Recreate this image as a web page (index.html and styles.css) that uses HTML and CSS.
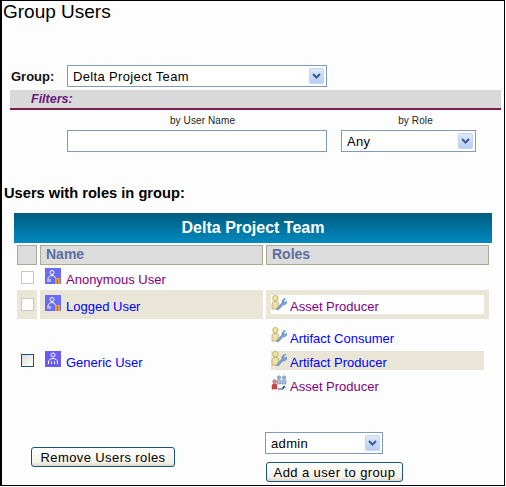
FILE: index.html
```html
<!DOCTYPE html>
<html lang="en">
<head>
<meta charset="utf-8">
<title>Group Users</title>
<link rel="stylesheet" href="styles.css">
</head>
<body>
<svg class="defs" width="0" height="0" aria-hidden="true">
  <defs>
    <symbol id="role" viewBox="0 0 16 16">
      <path d="M5 14.500l6-6.700c-.5-2 .8-4.300 3.600-4.300l-1.800 2.200.6 1.600 1.700-.1.900-1.600c.5 2.700-1.800 4.800-4 4.200l-4.500 5z" fill="#78a2d4" stroke="#5a84b8" stroke-width=".6"/>
      <path d="M1 14V9.500C1 7.500 2.300 6.300 4.400 6.300S8 7.500 8 9.500L5.500 14z" fill="#ebe0a8" stroke="#b0a060" stroke-width=".7"/>
      <circle cx="4.400" cy="3.200" r="2.800" fill="#f2e294" stroke="#b0a060" stroke-width=".7"/>
    </symbol>
    <symbol id="group" viewBox="0 0 16 16">
      <circle cx="8" cy="2.500" r="1.700" fill="#9ab6d6" stroke="#54789f" stroke-width=".5"/>
      <circle cx="13" cy="2.500" r="1.700" fill="#9ab6d6" stroke="#54789f" stroke-width=".5"/>
      <path d="M6 9V6c0-1 1-1.500 2-1.500S10 5 10 6v3zM11 9V6c0-1 1-1.500 2-1.500S15 5 15 6v3z" fill="#a8c2de" stroke="#54789f" stroke-width=".5"/>
      <circle cx="3.500" cy="6.500" r="1.800" fill="#e09090" stroke="#a03030" stroke-width=".5"/>
      <path d="M1 14v-3.500c0-1 1-1.800 2.500-1.800S6 9.500 6 10.500V14z" fill="#cc4848" stroke="#a03030" stroke-width=".5"/>
      <path d="M7 14h5l1-2.500M11.500 13l1.500-1.800 1.500 1.500" fill="none" stroke="#1c4a80" stroke-width="1.100"/>
    </symbol>
  </defs>
</svg>
<main class="frame">
  <h1 class="title">Group Users</h1>

  <div class="group-row">
    <label class="group-label" for="group-select">Group:</label>
    <div class="select select-group">
      <select id="group-select"><option>Delta Project Team</option></select>
      <span class="arrow"><svg width="9" height="6" viewBox="0 0 9 6"><path d="M1 1l3.500 3.500L8 1" fill="none" stroke="#3a5a90" stroke-width="2"/></svg></span>
    </div>
  </div>

  <div class="filters-bar">Filters:</div>

  <div class="filters">
    <div class="filter filter-name">
      <label class="filter-label" for="f-name">by User Name</label>
      <input id="f-name" class="text-input" type="text">
    </div>
    <div class="filter filter-role">
      <label class="filter-label" for="f-role">by Role</label>
      <div class="select select-role">
        <select id="f-role"><option>Any</option></select>
        <span class="arrow"><svg width="9" height="6" viewBox="0 0 9 6"><path d="M1 1l3.500 3.500L8 1" fill="none" stroke="#3a5a90" stroke-width="2"/></svg></span>
      </div>
    </div>
  </div>

  <h2 class="section-title">Users with roles in group:</h2>

  <section class="table">
    <div class="table-title">Delta Project Team</div>
    <div class="grid">
      <div class="head"></div>
      <div class="head head-text">Name</div>
      <div class="head head-text">Roles</div>

      <div class="cell cell-check"><span class="check"></span></div>
      <div class="cell cell-user user-anon">
        <svg class="user-icon" width="16" height="16" viewBox="0 0 16 16"><rect width="16" height="16" fill="#6a6af8"/><circle cx="7" cy="4.500" r="2" fill="none" stroke="#fff"/><path d="M3 14V11c0-2 2-3.500 4-3.500 1.500 0 3 1 3.500 2.500M5 14v-3" fill="none" stroke="#fff"/><rect x="10" y="10" width="5" height="6" fill="#f0a020"/><rect x="12" y="11" width="1" height="5" fill="#b86a00"/></svg>
        <a class="link visited" href="#">Anonymous User</a>
      </div>
      <div class="cell"></div>

      <div class="cell cell-check tinted"><span class="check"></span></div>
      <div class="cell cell-user user-logged tinted">
        <svg class="user-icon" width="16" height="16" viewBox="0 0 16 16"><rect width="16" height="16" fill="#6a6af8"/><circle cx="7" cy="4.500" r="2" fill="none" stroke="#fff"/><path d="M3 14V11c0-2 2-3.500 4-3.500 1.500 0 3 1 3.500 2.500M5 14v-3" fill="none" stroke="#fff"/><rect x="10" y="10" width="5" height="6" fill="#f0a020"/><rect x="12" y="11" width="1" height="5" fill="#b86a00"/></svg>
        <a class="link" href="#">Logged User</a>
      </div>
      <div class="cell cell-roles tinted">
        <div class="role role-white">
          <svg class="role-icon" width="16" height="16"><use href="#role"/></svg>
          <a class="link visited" href="#">Asset Producer</a>
        </div>
      </div>

      <div class="cell cell-check check-generic"><span class="check check-active"></span></div>
      <div class="cell cell-user user-generic">
        <svg class="user-icon" width="16" height="16" viewBox="0 0 16 16"><rect width="16" height="16" fill="#6a5cf8"/><circle cx="8" cy="4" r="2" fill="none" stroke="#fff"/><path d="M3.500 13v-2c0-2 2-3.500 4.500-3.500s4.500 1.500 4.500 3.500v2M6.500 13v-2.500M9.500 13v-2.500" fill="none" stroke="#fff"/></svg>
        <a class="link" href="#">Generic User</a>
      </div>
      <div class="cell cell-roles roles-list">
        <div class="role">
          <svg class="role-icon" width="16" height="16"><use href="#role"/></svg>
          <a class="link" href="#">Artifact Consumer</a>
        </div>
        <div class="role role-tinted">
          <svg class="role-icon" width="16" height="16"><use href="#role"/></svg>
          <a class="link" href="#">Artifact Producer</a>
        </div>
        <div class="role">
          <svg class="role-icon" width="16" height="16"><use href="#group"/></svg>
          <a class="link visited" href="#">Asset Producer</a>
        </div>
      </div>
    </div>
  </section>

  <div class="actions">
    <button class="btn btn-remove" type="button">Remove Users roles</button>
    <div class="add">
      <div class="select select-user">
        <select aria-label="User"><option>admin</option></select>
        <span class="arrow"><svg width="9" height="6" viewBox="0 0 9 6"><path d="M1 1l3.500 3.500L8 1" fill="none" stroke="#3a5a90" stroke-width="2"/></svg></span>
      </div>
      <button class="btn btn-add" type="button">Add a user to group</button>
    </div>
  </div>
</main>
</body>
</html>
```
FILE: styles.css
```css
* { box-sizing: border-box; }
html, body { margin: 0; padding: 0; background: #fff; }
.defs { position: absolute; }
.frame {
  width: 505px;
  height: 486px;
  background: #fdfdfd;
  border-style: solid;
  border-color: #000;
  border-width: 1px 1px 1px 2px;
  font-family: "Liberation Sans", Arial, sans-serif;
  font-size: 13px;
  color: #000;
  overflow: hidden;
}
.title {
  margin: 0 0 0 1px;
  height: 64px;
  font-size: 19px;
  line-height: 22px;
  font-weight: 400;
}
.group-row { display: flex; align-items: center; height: 22px; padding-left: 9px; }
.group-label { width: 56px; font-size: 13px; font-weight: 700; color: #111; }
.select { position: relative; height: 22px; }
.select select {
  appearance: none;
  width: 100%;
  height: 100%;
  margin: 0;
  padding: 0 0 0 5px;
  border: 1px solid #7f9db9;
  border-radius: 0;
  background: #fff;
  font: 13px "Liberation Sans", Arial, sans-serif;
  letter-spacing: .35px;
  color: #000;
}
.arrow {
  position: absolute;
  top: 3px;
  right: 3px;
  bottom: 3px;
  width: 15px;
  display: flex;
  align-items: center;
  justify-content: center;
  background: linear-gradient(#dfe8fb, #b8cdf6);
  border: 1px solid #c4d4f6;
  border-radius: 2px;
}
.select-group { width: 260px; }
.select-role { width: 135px; }
.select-user { width: 118px; }
.filters-bar {
  margin: 3px 3px 0 8px;
  height: 20px;
  padding: 1px 0 0 21px;
  background: #d9d9d9;
  border-bottom: 2px solid #7d1f4f;
  font-size: 12.5px;
  line-height: 16px;
  font-weight: 700;
  font-style: italic;
  color: #6a1b80;
}
.filters { display: flex; margin: 4px 0 0 65px; }
.filter { display: flex; flex-direction: column; align-items: center; }
.filter-name { width: 260px; margin-right: 14px; }
.filter-role { width: 135px; }
.filter-label { height: 16px; padding-top: 1px; font-size: 10px; line-height: 12px; letter-spacing: .1px; color: #222; }
.filter-name .filter-label { margin-left: 11px; }
.filter-role .filter-label { margin-left: 14px; }
.text-input {
  width: 100%;
  height: 22px;
  margin: 0;
  border: 1px solid #7f9db9;
  background: #fff;
  border-radius: 0;
}
.section-title {
  margin: 33px 0 0 2px;
  font-size: 14.67px;
  line-height: 17px;
  font-weight: 700;
}
.table { width: 478px; margin: 11px 0 0 12px; }
.table-title {
  height: 30px;
  background: linear-gradient(#005c7e, #0089c0);
  color: #fff;
  font-size: 16px;
  line-height: 30px;
  font-weight: 700;
  text-align: center;
}
.grid {
  display: grid;
  grid-template-columns: 20px 223px 223px;
  column-gap: 3px;
  padding: 2px 3px 0;
  grid-template-rows: 20px 25px 29px auto;
}
.head { background: #dcdcdc; border: 1px solid #a9a996; }
.head-text {
  padding-left: 5px;
  font-size: 14px;
  line-height: 17px;
  font-weight: 700;
  color: #5a6ea0;
}
.cell { min-width: 0; }
.tinted { background: #e9e6d8; }
.cell-check { display: flex; align-items: center; justify-content: center; }
.check-generic { padding-top: 2px; }
.check {
  width: 13px;
  height: 13px;
  background: #fff;
  border: 1px solid #c8c8bc;
}
.check-active {
  border-color: #1c5180;
  background: linear-gradient(135deg, #dcdcd6, #fff);
}
.cell-user { display: flex; align-items: flex-start; gap: 5px; padding-left: 5px; }
.user-anon { padding-top: 3px; }
.user-logged { padding-top: 5px; }
.user-generic { padding-top: 32px; }
.user-icon { flex: none; }
.cell-user .link { margin-top: 4px; }
.link { color: #0000ff; text-decoration: none; line-height: 16px; }
.visited { color: #800080; }
.cell-roles { padding: 5px; }
.roles-list { padding: 8px 5px 5px; display: flex; flex-direction: column; gap: 5px; }
.role { display: flex; align-items: flex-start; gap: 3px; height: 19px; }
.role .link { margin-top: 4px; }
.role-white { background: #fff; }
.role-tinted { background: #e9e6d8; }
.role-icon { flex: none; }
.actions { display: flex; margin-top: 33px; padding-left: 29px; }
.btn {
  height: 20px;
  margin: 0;
  padding: 0;
  border: 1px solid #1c5180;
  border-radius: 3px;
  background: linear-gradient(#fff, #f3f1e8 80%, #dcd8c8);
  font: 13px "Liberation Sans", Arial, sans-serif;
  letter-spacing: .4px;
  color: #000;
}
.btn-remove { width: 144px; margin-top: 15px; }
.add { margin-left: 90px; }
.btn-add { display: block; width: 137px; margin: 8px 0 0 1px; }
```
